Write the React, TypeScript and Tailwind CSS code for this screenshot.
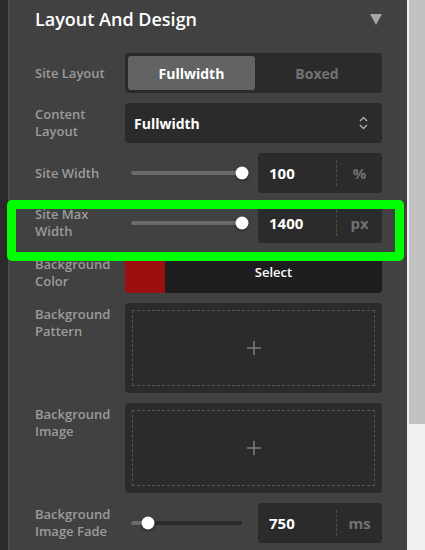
import type { ReactNode } from 'react';

const font = { fontFamily: '"Open Sans", "Noto Sans", sans-serif' };

function Row({ label, children }: { label: ReactNode; children: ReactNode }) {
  return (
    <div className="flex items-start">
      <div className="flex h-10 w-[90px] shrink-0 items-center text-[13px] leading-[17px] font-semibold text-[#9b9b9b]">
        <span>{label}</span>
      </div>
      <div className="flex-1">{children}</div>
    </div>
  );
}

function NumberField({ value, unit }: { value: string; unit: string }) {
  return (
    <div className="flex h-10 w-[124px] items-center rounded-[4px] bg-[#2b2b2b]">
      <span className="w-[78px] pl-[11px] text-[15px] font-bold text-white">{value}</span>
      <div className="h-[26px] border-l border-dashed border-[#4e4e4e]" />
      <span className="flex-1 text-center text-[15px] font-bold text-[#717171]">{unit}</span>
    </div>
  );
}

function SliderField({ percent, value, unit }: { percent: number; value: string; unit: string }) {
  return (
    <div className="flex h-10 items-center">
      <div className="w-[133px] pl-[6px] pr-[16px]">
        <div className="relative h-1 rounded-full bg-[#2a2a2a]">
          <div className="h-1 rounded-full bg-[#6b6b6b]" style={{ width: `${percent}%` }} />
          <div
            className="absolute top-1/2 h-[13px] w-[13px] -translate-x-1/2 -translate-y-1/2 rounded-full bg-white shadow-[0_1px_3px_rgba(0,0,0,0.5)]"
            style={{ left: `${percent}%` }}
          />
        </div>
      </div>
      <NumberField value={value} unit={unit} />
    </div>
  );
}

function Upload() {
  return (
    <div className="h-[90px] rounded-[4px] bg-[#2b2b2b] p-[7px]">
      <div className="flex h-full items-center justify-center border border-dashed border-[#555]">
        <svg width="16" height="16" viewBox="0 0 16 16" fill="none" stroke="#7a7a7a" strokeWidth="1.6">
          <path d="M8 1v14M1 8h14" />
        </svg>
      </div>
    </div>
  );
}

export default function App() {
  return (
    <div className="relative flex h-[550px] w-[425px] overflow-hidden bg-[#f0f0f0]" style={font}>
      <div className="w-2 bg-[#2a2a2a]" />
      <div className="w-0.5 bg-[#4b4b4b]" />

      <div className="flex-1 bg-[#414141] px-[25px]">
        <div className="flex h-[38px] items-center justify-between">
          <h2 className="text-[18px] font-semibold text-white">Layout And Design</h2>
          <svg width="12" height="11" viewBox="0 0 12 11">
            <path d="M0 0h12L6 11z" fill="#a6a6a6" />
          </svg>
        </div>

        <div className="flex flex-col gap-[10px] pt-[15px]">
          <Row label="Site Layout">
            <div className="flex h-10 rounded-[4px] bg-[#2b2b2b] p-[3px] text-[14px] font-bold">
              <div className="flex w-[127px] items-center justify-center rounded-[3px] bg-[#636363] text-white">
                Fullwidth
              </div>
              <div className="flex flex-1 items-center justify-center text-[#727272]">Boxed</div>
            </div>
          </Row>

          <Row label={<>Content<br />Layout</>}>
            <div className="flex h-10 items-center justify-between rounded-[4px] bg-[#2b2b2b] pl-[9px] pr-[14px]">
              <span className="text-[14px] font-bold text-white">Fullwidth</span>
              <svg width="9" height="14" viewBox="0 0 9 14" fill="none" stroke="#a8a8a8" strokeWidth="1.5">
                <path d="M1 5l3.5-3.5L8 5M1 9l3.5 3.5L8 9" />
              </svg>
            </div>
          </Row>

          <Row label="Site Width">
            <SliderField percent={100} value="100" unit="%" />
          </Row>

          <Row label={<>Site Max<br />Width</>}>
            <SliderField percent={100} value="1400" unit="px" />
          </Row>

          <Row label={<>Background<br />Color</>}>
            <div className="flex h-10 overflow-hidden rounded-[4px]">
              <div className="w-10 bg-[#9b0f0f]" />
              <div className="flex flex-1 items-center justify-center bg-[#1e1e1e] text-[13px] font-semibold text-white">
                Select
              </div>
            </div>
          </Row>

          <Row label={<>Background<br />Pattern</>}>
            <Upload />
          </Row>

          <Row label={<>Background<br />Image</>}>
            <Upload />
          </Row>

          <Row label={<>Background<br />Image Fade</>}>
            <SliderField percent={15} value="750" unit="ms" />
          </Row>
        </div>
      </div>

      <div className="w-0.5 bg-[#f0f0f0]" />
      <div className="flex w-4 flex-col">
        <div className="h-[424px] bg-[#c1c1c1]" />
        <div className="flex-1 bg-[#f0f0f0]" />
      </div>

      {/* highlight frame around the max width row */}
      <div className="pointer-events-none absolute left-[7px] top-[200px] h-[61px] w-[397px] rounded-[5px] border-[9px] border-[#00ff00]" />
    </div>
  );
}
